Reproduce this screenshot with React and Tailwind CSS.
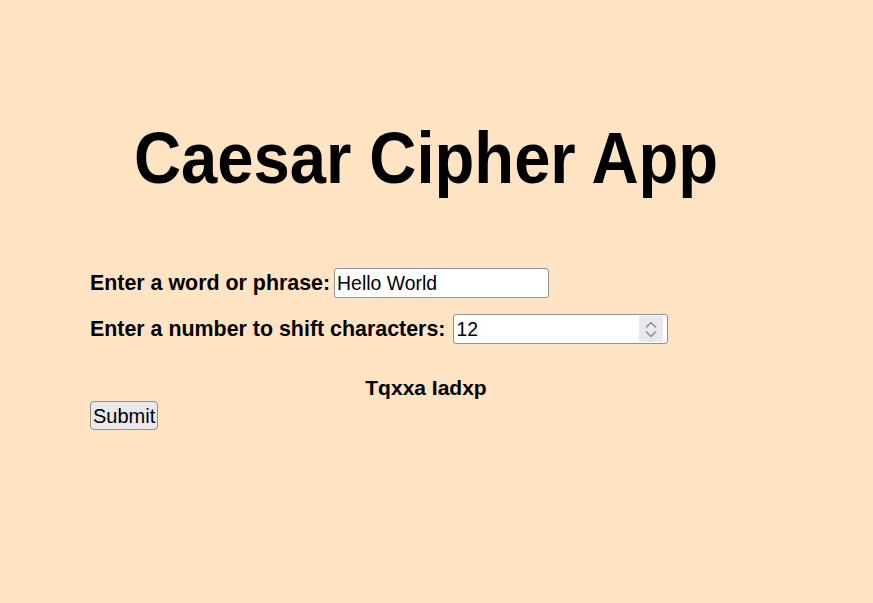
import React, { useState } from 'react';

const shift = (text, n) =>
    text.split('').map(ch => {
        const c = ch.charCodeAt(0);
        if (c >= 65 && c <= 90) return String.fromCharCode(((c - 65 + n) % 26 + 26) % 26 + 65);
        if (c >= 97 && c <= 122) return String.fromCharCode(((c - 97 + n) % 26 + 26) % 26 + 97);
        return ch;
    }).join('');

const App = () => {
    const [word, setWord] = useState('Hello World');
    const [num, setNum] = useState(12);
    const [result, setResult] = useState(shift('Hello World', 12));

    return (
        <div className="min-h-screen bg-[#ffe4c4] text-black font-['Liberation_Sans',Arial,sans-serif]">
            <div className="w-[672px] ml-[90px] pt-[118px]">
                <h1 className="text-center text-[72px] leading-[80px] font-bold scale-x-[0.905]">
                    Caesar Cipher App
                </h1>

                <form
                    className="mt-[70px]"
                    onSubmit={(e) => {
                        e.preventDefault();
                        setResult(shift(word, Number(num)));
                    }}
                >
                    <div className="flex items-center h-[30px] mb-[16px]">
                        <label className="text-[21.4px] font-bold mr-[4px]">Enter a word or phrase:</label>
                        <input
                            type="text"
                            value={word}
                            onChange={(e) => setWord(e.target.value)}
                            className="w-[215px] h-[30px] px-[2px] bg-white border border-[#8f8f9d] rounded-[3px] text-[19.4px] outline-none"
                        />
                    </div>
                    <div className="flex items-center h-[30px]">
                        <label className="text-[21.4px] font-bold mr-[8px]">Enter a number to shift characters:</label>
                        <div className="relative">
                            <input
                                type="number"
                                value={num}
                                onChange={(e) => setNum(e.target.value)}
                                className="w-[215px] h-[30px] pl-[2px] pr-[30px] bg-white border border-[#8f8f9d] rounded-[3px] text-[19.4px] outline-none appearance-none [&::-webkit-inner-spin-button]:appearance-none [&::-webkit-outer-spin-button]:appearance-none [-moz-appearance:textfield]"
                            />
                            <div className="absolute right-[5px] top-[2px] bottom-[2px] w-[24px] bg-[#e9e9ed] flex flex-col items-center justify-center gap-[3px] pointer-events-none">
                                <svg width="12" height="7" viewBox="0 0 12 7" fill="none" stroke="#8f8f9d" strokeWidth="1.6" strokeLinecap="round" strokeLinejoin="round">
                                    <path d="M1.5 6 L6 1.5 L10.5 6" />
                                </svg>
                                <svg width="12" height="7" viewBox="0 0 12 7" fill="none" stroke="#8f8f9d" strokeWidth="1.6" strokeLinecap="round" strokeLinejoin="round">
                                    <path d="M1.5 1 L6 5.5 L10.5 1" />
                                </svg>
                            </div>
                        </div>
                    </div>

                    <p className="mt-[32px] text-center text-[21px] font-bold leading-[24px]">{result}</p>

                    <button
                        type="submit"
                        className="mt-[1px] h-[29px] px-[2px] bg-[#e9e9ed] border border-[#8f8f9d] rounded-[4px] text-[20px] leading-none"
                    >
                        Submit
                    </button>
                </form>
            </div>
        </div>
    );
};

export default App;
